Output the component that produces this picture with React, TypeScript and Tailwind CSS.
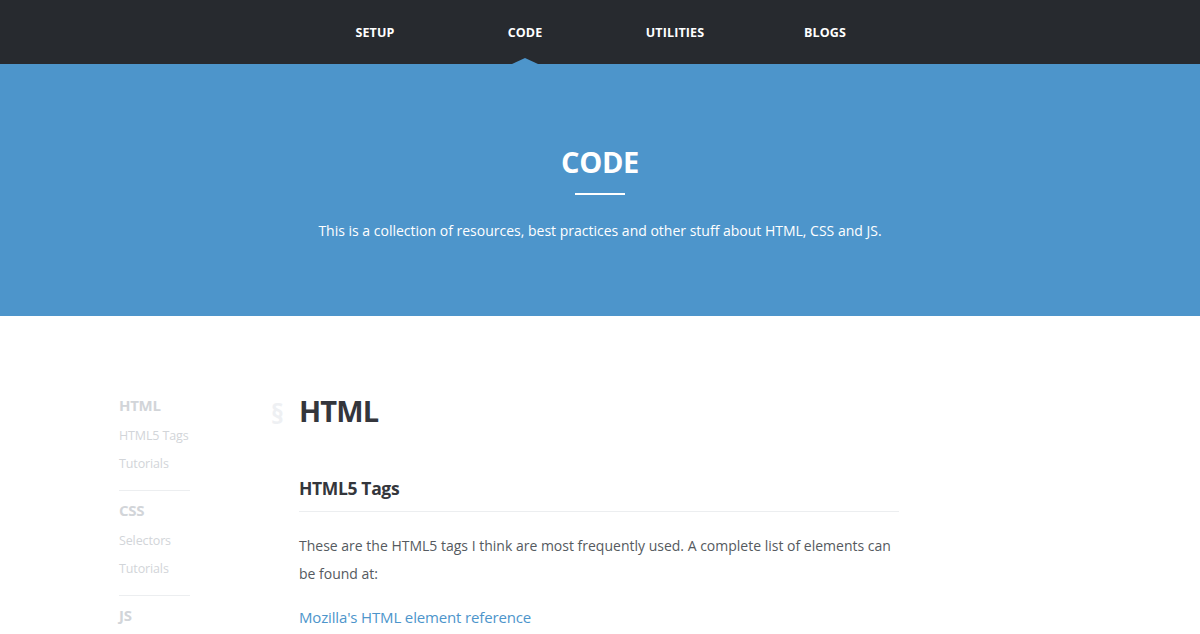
const NAV = ['Setup', 'Code', 'Utilities', 'Blogs'];

const SIDEBAR = [
  { title: 'HTML', items: ['HTML5 Tags', 'Tutorials'] },
  { title: 'CSS', items: ['Selectors', 'Tutorials'] },
  { title: 'JS', items: [] as string[] },
];

export default function App() {
  return (
    <div className="min-h-[634px] bg-white font-['Open_Sans',sans-serif] text-[#555]">
      {/* Top nav */}
      <nav className="relative h-16 bg-[#272a2f]">
        <ul className="flex h-full items-center justify-center pt-[2px]">
          {NAV.map((item) => (
            <li key={item} className="relative flex h-full w-[150px] items-center justify-center">
              <a className="text-[12.5px] font-bold uppercase tracking-[0.01em] text-white">{item}</a>
              {item === 'Code' && (
                <span className="absolute bottom-0 left-1/2 h-0 w-0 -translate-x-1/2 border-x-[13px] border-b-[6px] border-x-transparent border-b-[#4d95cb]" />
              )}
            </li>
          ))}
        </ul>
      </nav>

      {/* Hero */}
      <header className="flex h-[252px] flex-col items-center bg-[#4d95cb] pt-[78px] text-white">
        <h1 className="text-[29px] font-bold leading-[40px] tracking-[-0.01em]">CODE</h1>
        <div className="mt-[11px] h-[2px] w-[50px] bg-white" />
        <p className="mt-[25px] text-[14px] leading-[22px]">
          This is a collection of resources, best practices and other stuff about HTML, CSS and JS.
        </p>
      </header>

      {/* Content */}
      <div className="flex pl-[119px] pt-[77px]">
        <aside className="w-[71px] shrink-0">
          {SIDEBAR.map((group, i) => (
            <div key={group.title} className={i > 0 ? 'border-t border-[#eceef0] pt-[7px]' : ''}>
              <div className="text-[15px] font-bold leading-[24px] tracking-[-0.02em] text-[#d2d5d9]">{group.title}</div>
              {group.items.length > 0 && (
                <ul className="mt-[5px] pb-[12px]">
                  {group.items.map((it) => (
                    <li key={it} className="whitespace-nowrap text-[12.5px] leading-[28px] tracking-[-0.01em] text-[#d2d5d9]">
                      {it}
                    </li>
                  ))}
                </ul>
              )}
            </div>
          ))}
        </aside>

        <main className="ml-[109px] mt-[1px] w-[600px]">
          <div className="relative">
            <span className="absolute -left-[28px] top-[3px] text-[26px] font-bold leading-[34px] text-[#eef0f3]">§</span>
            <h2 className="text-[29px] font-bold leading-[34px] tracking-[-0.03em] text-[#34363c]">HTML</h2>
          </div>
          <h3 className="mt-[47px] border-b border-[#eceef0] pb-[10px] text-[17.5px] font-bold leading-[26px] tracking-[-0.02em] text-[#34363c]">
            HTML5 Tags
          </h3>
          <p className="mt-[20px] text-[14px] leading-[28px] text-[#555a60]">
            These are the HTML5 tags I think are most frequently used. A complete list of elements can be found at:
          </p>
          <a className="mt-[15px] block text-[15px] leading-[28px] tracking-[-0.01em] text-[#4d95cb]">Mozilla's HTML element reference</a>
        </main>
      </div>
    </div>
  );
}
